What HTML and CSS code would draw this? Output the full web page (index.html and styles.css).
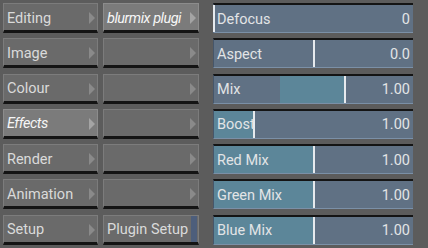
FILE: index.html
```html
<!DOCTYPE html>
<html lang="en">
<head>
  <meta charset="UTF-8" />
  <title>Blur Mix Plugin</title>
  <link rel="stylesheet" href="styles.css">
</head>
<body>

  <div class="panel">

    <!-- Main menu -->
    <div class="col menu">
      <div class="btn"><span>Editing</span><i class="arrow"></i></div>
      <div class="btn"><span>Image</span><i class="arrow"></i></div>
      <div class="btn"><span>Colour</span><i class="arrow"></i></div>
      <div class="btn active"><span>Effects</span><i class="arrow"></i></div>
      <div class="btn"><span>Render</span><i class="arrow"></i></div>
      <div class="btn"><span>Animation</span><i class="arrow"></i></div>
      <div class="btn"><span>Setup</span><i class="arrow"></i></div>
    </div>

    <!-- Sub menu -->
    <div class="col submenu">
      <div class="btn active"><span>blurmix plugi</span><i class="arrow"></i></div>
      <div class="btn"><span></span><i class="arrow"></i></div>
      <div class="btn"><span></span><i class="arrow"></i></div>
      <div class="btn"><span></span><i class="arrow"></i></div>
      <div class="btn"><span></span><i class="arrow"></i></div>
      <div class="btn"><span></span><i class="arrow"></i></div>
      <div class="btn"><span>Plugin Setup</span><i class="tab"></i></div>
    </div>

    <!-- Parameters -->
    <div class="col params">
      <div class="slider">
        <div class="fill" style="left:0%;width:0%"></div>
        <div class="mark" style="left:0%"></div>
        <span class="label">Defocus</span><span class="value">0</span>
      </div>
      <div class="slider">
        <div class="fill" style="left:50%;width:0%"></div>
        <div class="mark" style="left:50%"></div>
        <span class="label">Aspect</span><span class="value">0.0</span>
      </div>
      <div class="slider">
        <div class="fill" style="left:33%;width:33%"></div>
        <div class="mark" style="left:66%"></div>
        <span class="label">Mix</span><span class="value">1.00</span>
      </div>
      <div class="slider">
        <div class="fill" style="left:0%;width:20%"></div>
        <div class="mark" style="left:20%"></div>
        <span class="label">Boost</span><span class="value">1.00</span>
      </div>
      <div class="slider">
        <div class="fill" style="left:0%;width:50%"></div>
        <div class="mark" style="left:50%"></div>
        <span class="label">Red Mix</span><span class="value">1.00</span>
      </div>
      <div class="slider">
        <div class="fill" style="left:0%;width:50%"></div>
        <div class="mark" style="left:50%"></div>
        <span class="label">Green Mix</span><span class="value">1.00</span>
      </div>
      <div class="slider">
        <div class="fill" style="left:0%;width:50%"></div>
        <div class="mark" style="left:50%"></div>
        <span class="label">Blue Mix</span><span class="value">1.00</span>
      </div>
    </div>

  </div>

</body>
</html>
```

FILE: styles.css
```css
/* Reset & Base */
* {
  box-sizing: border-box;
  margin: 0;
  padding: 0;
}

body {
  font-family: Roboto, sans-serif;
  font-size: 14.5px;
  background-color: #5c5c5c;
  color: #dadada;
  width: 428px;
  height: 248px;
  overflow: hidden;
}

/* Layout */
.panel {
  display: flex;
  padding: 3px 0 0 3px;
}

.col {
  display: flex;
  flex-direction: column;
  gap: 5.25px;
}

.menu {
  width: 95px;
  margin-right: 5px;
}

.submenu {
  width: 96px;
  margin-right: 14px;
}

.params {
  width: 200px;
}

/* Buttons */
.btn {
  height: 30px;
  display: flex;
  align-items: center;
  justify-content: space-between;
  background-color: #6a6a6a;
  border: 1px solid #7c7c7c;
  border-bottom: 3px solid #141414;
  padding: 2px 2px 0 3px;
  white-space: nowrap;
  overflow: hidden;
}

.btn.active {
  background-color: #7b7b7b;
  border-color: #8c8c8c;
  border-bottom-color: #141414;
  color: #f6f6f6;
  font-style: italic;
  letter-spacing: -0.5px;
}

.arrow {
  width: 0;
  height: 0;
  border-left: 6px solid #8a8a8a;
  border-top: 6px solid transparent;
  border-bottom: 6px solid transparent;
  flex-shrink: 0;
}

.btn.active .arrow {
  border-left-color: #a4a4a4;
}

.tab {
  width: 6px;
  align-self: stretch;
  margin: -3px -1px 0 0;
  background-color: #4d5e7b;
  flex-shrink: 0;
}

/* Sliders */
.slider {
  position: relative;
  height: 30px;
  display: flex;
  align-items: center;
  justify-content: space-between;
  background-color: #607184;
  border-top: 2px solid #141414;
  border-left: 1px solid #46566a;
  border-bottom: 1px solid #7b90a7;
  padding: 1px 3px 0 3px;
  color: #e2e4e6;
}

.fill {
  position: absolute;
  top: 0;
  bottom: 0;
  background-color: #5c8699;
}

.mark {
  position: absolute;
  top: 0;
  bottom: 0;
  width: 2px;
  margin-left: -1px;
  background-color: #e6eaee;
}

.label,
.value {
  position: relative;
}
```
